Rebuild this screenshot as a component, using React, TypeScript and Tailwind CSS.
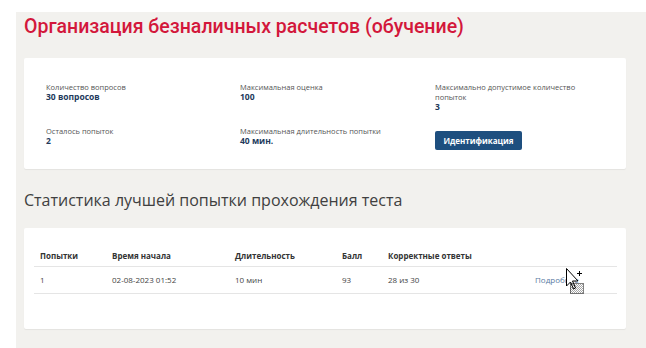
import React from 'react';

const stats = [
  { label: 'Количество вопросов', value: '30 вопросов' },
  { label: 'Максимальная оценка', value: '100' },
  { label: 'Максимально допустимое количество попыток', value: '3' },
  { label: 'Осталось попыток', value: '2' },
  { label: 'Максимальная длительность попытки', value: '40 мин.' },
];

const cols = ['Попытки', 'Время начала', 'Длительность', 'Балл', 'Корректные ответы', ''];
const row = ['1', '02-08-2023 01:52', '10 мин', '93', '28 из 30'];

// column widths of the result table
const grid = 'grid grid-cols-[72px_123px_107px_46px_147px_1fr]';

function Stat({ label, value }: { label: string; value: string }) {
  return (
    <div className="flex flex-col">
      <span className="w-[148px] text-[7.5px] leading-[10px] text-[#555]">{label}</span>
      <span className="text-[8.5px] font-bold leading-[10px] text-[#22395b]">{value}</span>
    </div>
  );
}

function Cursor() {
  return (
    <svg className="absolute left-[560px] top-[266px]" width="30" height="30" viewBox="0 0 30 30">
      <defs>
        <pattern id="dots" width="2" height="2" patternUnits="userSpaceOnUse">
          <rect width="1" height="1" fill="#000" />
          <rect x="1" y="1" width="1" height="1" fill="#000" />
        </pattern>
      </defs>
      <path
        d="M6.5 2.5 L6.5 20 L10.5 16 L13.5 23 L15.5 22 L12.5 15 L18 15 Z"
        fill="#fff"
        stroke="#000"
        strokeWidth="1"
      />
      <path d="M17 7.5 H22 M19.5 5 V10" stroke="#000" strokeWidth="1" />
      <rect x="10" y="18" width="13" height="9" fill="url(#dots)" fillOpacity="0.35" />
      <rect x="10.5" y="17.5" width="13" height="10" fill="none" stroke="#000" strokeWidth="1" strokeDasharray="1 1" />
    </svg>
  );
}

export default function App() {
  return (
    <div className="relative h-[348px] w-[646px] overflow-hidden bg-white font-['Open_Sans',sans-serif]">
      <div className="ml-[16px] mt-[12px] h-[336px] bg-[#f2f1ee] pl-[8px] pr-[20px] pt-[1px]">
        <h1 className="font-['Roboto',sans-serif] text-[19.5px] font-medium leading-[28px] text-[#d3173b]">
          Организация безналичных расчетов (обучение)
        </h1>

        <div className="mt-[17px] rounded-[2px] bg-white pb-[19px] pl-[22px] pt-[24px] shadow-[0_1px_1px_rgba(0,0,0,0.06)]">
          <div className="grid grid-cols-[194px_195px_1fr] gap-y-[14px]">
            <Stat {...stats[0]} />
            <Stat {...stats[1]} />
            <Stat {...stats[2]} />
            <Stat {...stats[3]} />
            <Stat {...stats[4]} />
            <div>
              <button className="mt-[2px] h-[19px] w-[87px] rounded-[2px] bg-[#1e4f7f] text-[8px] font-bold leading-[19px] text-white">
                Идентификация
              </button>
            </div>
          </div>
        </div>

        <h2 className="mt-[19px] text-[16px] font-normal leading-[24px] text-[#404040]">
          Статистика лучшей попытки прохождения теста
        </h2>

        <div className="mt-[16px] rounded-[2px] bg-white pb-[35px] pl-[10px] pr-[9px] pt-[17px] shadow-[0_1px_1px_rgba(0,0,0,0.06)]">
          <div className={`${grid} h-[22px] items-center border-b border-[#e5e5e5]`}>
            {cols.map((c) => (
              <span key={c} className="pl-[6px] text-[8px] font-bold text-[#333]">
                {c}
              </span>
            ))}
          </div>
          <div className={`${grid} h-[27px] items-center border-b border-[#e5e5e5]`}>
            {row.map((c, i) => (
              <span key={i} className="pl-[6px] text-[8px] text-[#444]">
                {c}
              </span>
            ))}
            <span className="pl-[6px] text-[8px] text-[#5b7aa3]">Подробнее</span>
          </div>
        </div>
      </div>
      <Cursor />
    </div>
  );
}
